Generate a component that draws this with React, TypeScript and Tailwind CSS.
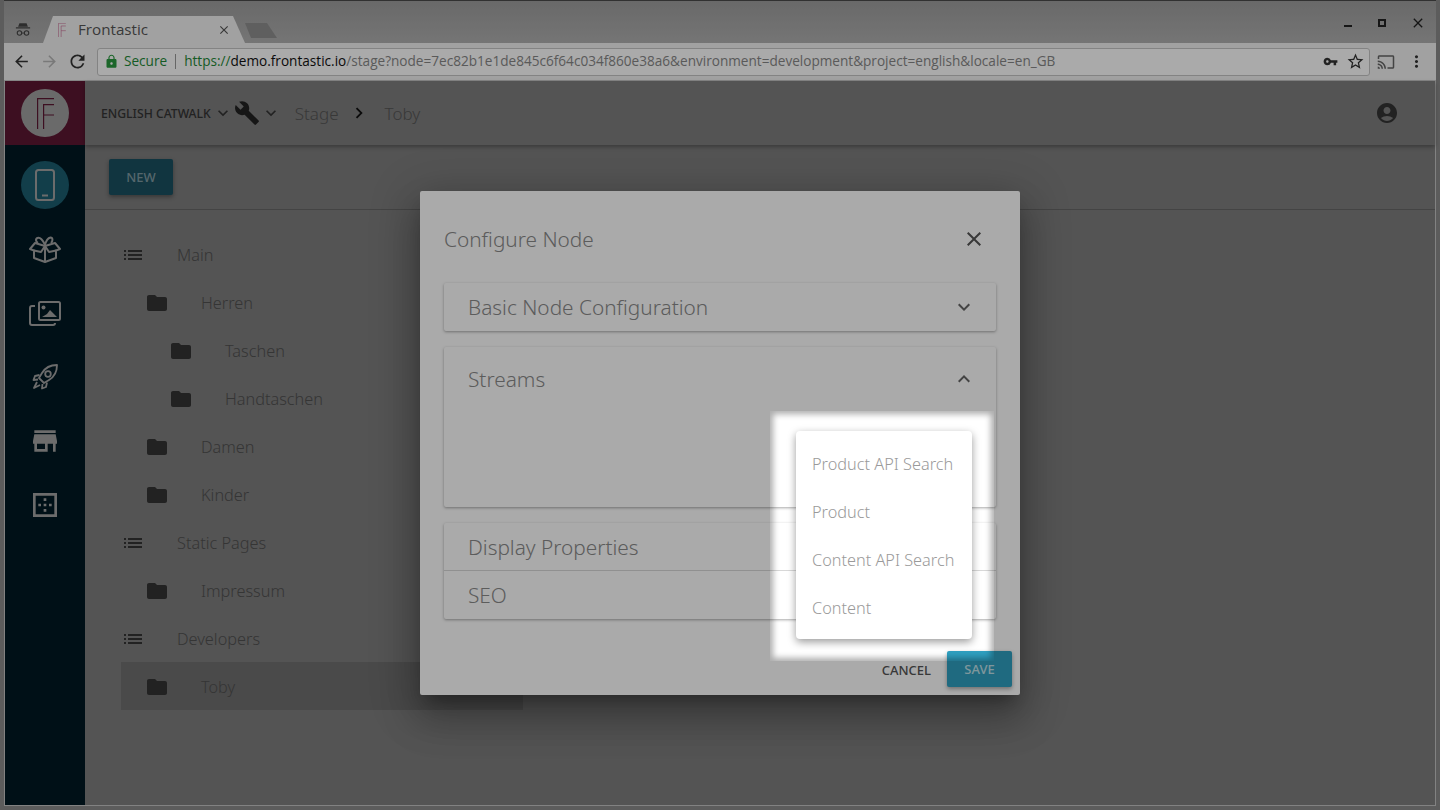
import {
  MdArrowBack, MdArrowForward, MdRefresh, MdLock, MdVpnKey, MdStarBorder, MdCast, MdMoreVert,
  MdClose, MdExpandMore, MdExpandLess, MdBuild, MdChevronRight, MdAccountCircle, MdList, MdFolder,
  MdStore, MdBorderOuter,
} from "react-icons/md";

const appFont = "font-['Noto_Sans',sans-serif]";

const tree = [
  { label: "Main", depth: 0 },
  { label: "Herren", depth: 1 },
  { label: "Taschen", depth: 2 },
  { label: "Handtaschen", depth: 2 },
  { label: "Damen", depth: 1 },
  { label: "Kinder", depth: 1 },
  { label: "Static Pages", depth: 0 },
  { label: "Impressum", depth: 1 },
  { label: "Developers", depth: 0 },
  { label: "Toby", depth: 1, active: true },
];

function LogoF({ className }: { className?: string }) {
  return (
    <svg viewBox="0 0 17 31" fill="none" className={className} stroke="currentColor" strokeWidth="1.2">
      <path d="M.6 31V.6H17M6.6 31V6.600H17M6.6 17H17" />
    </svg>
  );
}

function Phone() {
  return (
    <svg viewBox="0 0 20 32" width="20" height="32" fill="none" stroke="#a3a3a3" strokeWidth="2">
      <rect x="1" y="1" width="18" height="30" rx="2.500" />
      <path d="M7 26.500h6" />
    </svg>
  );
}

function GiftBox() {
  return (
    <svg viewBox="0 0 32 27" width="32" height="27" fill="none" stroke="#a3a3a3" strokeWidth="2" strokeLinejoin="round">
      <path d="M16 10 6 7 1 13l4 1.500V22l11 4 11-4v-7.500l4-1.500-5-6-10 3Z" />
      <path d="M16 10v16M16 10l-4 6-7-1.500M16 10l4 6 7-1.500" />
      <path d="M16 9C14 4 11 1 8.500 2 6 3 7 6 9 7M16 9c1-4 3-7 5.500-7.500C24 1.500 24 5 22 7" />
    </svg>
  );
}

function Photos() {
  return (
    <svg viewBox="0 0 32 25" width="32" height="25" fill="none" stroke="#a3a3a3" strokeWidth="2">
      <rect x="10" y="1" width="21" height="18" rx="1.500" />
      <path d="M6 5H3a2 2 0 0 0-2 2v15a2 2 0 0 0 2 2h21a2 2 0 0 0 2-2" />
      <circle cx="14.500" cy="6.500" r="2" fill="#a3a3a3" stroke="none" />
      <path d="m13 16 5-3 3-4 7 7H13Z" fill="#a3a3a3" stroke="none" />
    </svg>
  );
}

function Rocket() {
  return (
    <svg viewBox="0 0 26 26" width="26" height="26" fill="none" stroke="#a3a3a3" strokeWidth="1.800" strokeLinejoin="round">
      <path d="M25 1c-7 0-12 3-15 8l-3 5 5 5 5-3c5-3 8-8 8-15Z" />
      <circle cx="16" cy="10" r="2.800" />
      <path d="M7.500 11 3 12l-1.500 4 4.500-.5M15 18.500 14 23l-4 1.500.5-4.500" />
      <path d="M5 18l-3 6 6-3" />
    </svg>
  );
}

function Incognito() {
  return (
    <svg viewBox="0 0 18 16" width="16" height="15" fill="#444">
      <path d="M5 1h8l1.500 4H3.500ZM1 5.500h16V7H1Z" />
      <circle cx="5" cy="12" r="2.500" fill="none" stroke="#444" strokeWidth="1.200" />
      <circle cx="13" cy="12" r="2.500" fill="none" stroke="#444" strokeWidth="1.200" />
      <path d="M7.500 11.500h3v1h-3Z" />
    </svg>
  );
}

function BrowserChrome() {
  return (
    <div className="shrink-0 font-['Open_Sans',sans-serif]">
      <div className="h-[43px] flex items-end bg-gradient-to-b from-[#9e9e9e] to-[#b0b0b0] border-t border-[#4a4a4a] pl-[11px] relative">
        <div className="w-[28px] h-[26px] flex items-center pb-[2px]"><Incognito /></div>
        <div className="w-[202px] h-[27px] bg-[#f2f2f2] [clip-path:polygon(0_100%,10px_0,190px_0,202px_100%)] flex items-center pl-[15px] pr-[14px] gap-[12px]">
          <LogoF className="h-[14px] w-[8px] text-[#c25a86]" />
          <span className="flex-1 text-[15.2px] text-[#565656] -mt-[1px]">Frontastic</span>
          <MdClose size={14} className="text-[#555]" />
        </div>
        <div className="w-[32px] h-[15px] mb-[5px] bg-[#8f8f8f] [clip-path:polygon(0_0,22px_0,32px_100%,6px_100%)]" />
        <div className="ml-auto flex items-center pr-[10px] pb-[12px] text-[#222]">
          <div className="w-[8px] h-[2px] mt-[6px] bg-[#222]" />
          <div className="w-[8px] h-[8px] border-2 border-[#222] ml-[26px]" />
          <MdClose size={16} className="ml-[24px]" />
        </div>
      </div>
      <div className="h-[38px] bg-[#f2f2f2] flex items-center pl-[8px] pr-[8px] border-b border-[#c8c8c8]">
        <MdArrowBack size={19} className="text-[#333]" />
        <MdArrowForward size={19} className="text-[#b6b6b6] ml-[9px]" />
        <MdRefresh size={21} className="text-[#333] ml-[8px]" />
        <div className="ml-[9px] w-[1273px] h-[28px] bg-white border border-[#c5c5c5] rounded-[3px] flex items-center pl-[6px] pr-[4px] text-[13.6px]">
          <MdLock size={15} className="text-[#2a9a3f]" />
          <span className="ml-[5px] text-[#1f8a38]">Secure</span>
          <div className="w-px h-[15px] bg-[#999] ml-[8px] mr-[8px]" />
          <span className="text-[#1f8a38]">https://</span>
          <span className="text-[#111]">demo.frontastic.io</span>
          <span className="text-[#888] flex-1 truncate">/stage?node=7ec82b1e1de845c6f64c034f860e38a6&amp;environment=development&amp;project=english&amp;locale=en_GB</span>
          <MdVpnKey size={15} className="text-[#333] mr-[8px]" />
          <MdStarBorder size={19} className="text-[#333]" />
        </div>
        <MdCast size={18} className="text-[#666] ml-[7px]" />
        <MdMoreVert size={19} className="text-[#333] ml-[12px]" />
      </div>
    </div>
  );
}

function Sidebar() {
  return (
    <aside className="w-[80px] shrink-0 bg-[#001923] flex flex-col items-center">
      <div className="w-full h-[64px] bg-[#5c1732] flex items-center justify-center">
        <div className="w-[48px] h-[48px] rounded-full bg-[#a0a0a0] flex items-center justify-center">
          <LogoF className="h-[31px] w-[17px] text-[#5c1732]" />
        </div>
      </div>
      <div className="w-full flex flex-col items-center pt-[16px]">
        <div className="w-[48px] h-[48px] rounded-full bg-[#1b5e70] flex items-center justify-center"><Phone /></div>
        <div className="h-[64px] flex items-center justify-center mt-[8px]"><GiftBox /></div>
        <div className="h-[64px] flex items-center justify-center"><Photos /></div>
        <div className="h-[64px] flex items-center justify-center"><Rocket /></div>
        <div className="h-[64px] flex items-center justify-center"><MdStore size={32} className="text-[#a3a3a3]" /></div>
        <div className="h-[64px] flex items-center justify-center"><MdBorderOuter size={32} className="text-[#a3a3a3]" /></div>
      </div>
    </aside>
  );
}

function TopBar() {
  return (
    <header className="h-[64px] shrink-0 bg-[#7e7e7e] shadow-[0_2px_4px_rgba(0,0,0,0.3)] flex items-center pl-[16px] pr-[36px] relative">
      <span className="text-[12.2px] font-medium text-[#333] pt-[2px]">ENGLISH CATWALK</span>
      <MdExpandMore size={20} className="text-[#333] ml-[2px]" />
      <MdBuild size={26} className="text-[#222] ml-[1px]" />
      <MdExpandMore size={20} className="text-[#333] ml-[1px]" />
      <span className="ml-[14px] text-[17px] font-light text-[#555] pt-[2px]">Stage</span>
      <MdChevronRight size={22} className="text-[#111] ml-[9px]" />
      <span className="ml-[15px] text-[17px] font-light text-[#555] pt-[2px]">Toby</span>
      <MdAccountCircle size={24} className="text-[#333] ml-auto" />
    </header>
  );
}

function Tree() {
  return (
    <div className="w-[402px] ml-[36px] mt-[20px] flex flex-col">
      {tree.map((row) => (
        <div key={row.label} className={`h-[48px] flex items-center pt-[2px] ${row.active ? "bg-[#6f6f6f]" : ""}`}>
          {row.depth === 0 ? (
            <div className="flex items-center">
              <MdList size={24} className="text-[#333]" />
              <span className="ml-[32px] text-[16.300px] font-light text-[#505050]">{row.label}</span>
            </div>
          ) : (
            <div className={`flex items-center ${row.depth === 1 ? "ml-[24px]" : "ml-[48px]"}`}>
              <MdFolder size={24} className="text-[#333]" />
              <span className="ml-[32px] text-[16.300px] font-light text-[#505050]">{row.label}</span>
            </div>
          )}
        </div>
      ))}
    </div>
  );
}

function Panel({ title, open }: { title: string; open?: boolean }) {
  return (
    <div className="bg-white shadow-[0_1px_3px_rgba(0,0,0,0.35)] rounded-[2px]">
      <div className={`${open ? "h-[64px]" : "h-[48px]"} flex items-center justify-between pl-[24px] pr-[20px]`}>
        <span className="text-[20.800px] font-light text-[#8a8a8a] pt-[2px]">{title}</span>
        {open ? <MdExpandLess size={24} className="text-[#666]" /> : <MdExpandMore size={24} className="text-[#666]" />}
      </div>
      {open && <div className="h-[96px]" />}
    </div>
  );
}

function Modal() {
  return (
    <div className="absolute left-[335px] top-[110px] w-[600px] h-[504px] bg-white rounded-[2px] shadow-[0_11px_15px_-7px_rgba(0,0,0,0.3),0_24px_38px_3px_rgba(0,0,0,0.2),0_9px_46px_8px_rgba(0,0,0,0.18)] px-[24px] flex flex-col">
      <div className="h-[92px] flex items-center justify-between pt-[4px]">
        <span className="text-[20.800px] font-light text-[#8a8a8a] pt-[2px]">Configure Node</span>
        <MdClose size={24} className="text-[#555] mr-[10px]" />
      </div>
      <div className="flex flex-col">
        <Panel title="Basic Node Configuration" />
        <div className="mt-[16px]"><Panel title="Streams" open /></div>
        <div className="mt-[16px]">
          <div className="shadow-[0_1px_3px_rgba(0,0,0,0.35)] rounded-[2px]">
            <div className="h-[48px] flex items-center pl-[24px] border-b border-[#d8d8d8]">
              <span className="text-[20.800px] font-light text-[#8a8a8a] pt-[2px]">Display Properties</span>
            </div>
            <div className="h-[48px] flex items-center pl-[24px]">
              <span className="text-[20.800px] font-light text-[#8a8a8a] pt-[2px]">SEO</span>
            </div>
          </div>
        </div>
      </div>
      <div className="flex-1 flex items-end justify-end pb-[8px] -mr-[16px]">
        <span className="text-[13px] font-medium text-[#555] mr-[16px] mb-[7px]">CANCEL</span>
        <div className="w-[65px] h-[36px] bg-[#2f9fc0] rounded-[2px] shadow-[0_2px_4px_rgba(0,0,0,0.35)] flex items-center justify-center pt-[2px] text-[13px] font-medium text-white/70">SAVE</div>
      </div>
    </div>
  );
}

export default function App() {
  return (
    <div className={`relative w-[1440px] h-[810px] overflow-hidden bg-[#8a8a8a] ${appFont}`}>
      <div className="h-full flex flex-col pl-[4px] pr-[4px] pb-[4px]">
        <BrowserChrome />
        <div className="flex-1 flex min-h-0 border-x border-b border-[#c4c4c4]">
          <Sidebar />
          <main className="flex-1 relative bg-[#7e7e7e] flex flex-col">
            <TopBar />
            <div className="h-[65px] shrink-0 border-b border-[#666] flex items-center pl-[24px]">
              <div className="w-[64px] h-[36px] bg-[#1a5060] rounded-[2px] shadow-[0_2px_4px_rgba(0,0,0,0.35)] flex items-center justify-center pt-[2px] text-[13px] font-medium text-[#7f9aa3]">NEW</div>
            </div>
            <Tree />
            <Modal />
          </main>
        </div>
      </div>
      {/* dim layer with a soft hole over the dropdown */}
      <div className="absolute left-[770px] top-[411px] w-[224px] h-[250px] shadow-[0_0_0_3000px_rgba(0,0,0,0.333),inset_0_0_6px_3px_rgba(0,0,0,0.333)]" />
      <div className="absolute left-[796px] top-[431px] w-[176px] h-[208px] bg-white rounded-[4px] py-[8px] shadow-[0_3px_8px_rgba(0,0,0,0.4)] text-[16.300px] font-light text-[#9a9a9a]">
        {["Product API Search", "Product", "Content API Search", "Content"].map((item) => (
          <div key={item} className="h-[48px] flex items-center pl-[16px] pt-[3px] whitespace-nowrap">{item}</div>
        ))}
      </div>
    </div>
  );
}
